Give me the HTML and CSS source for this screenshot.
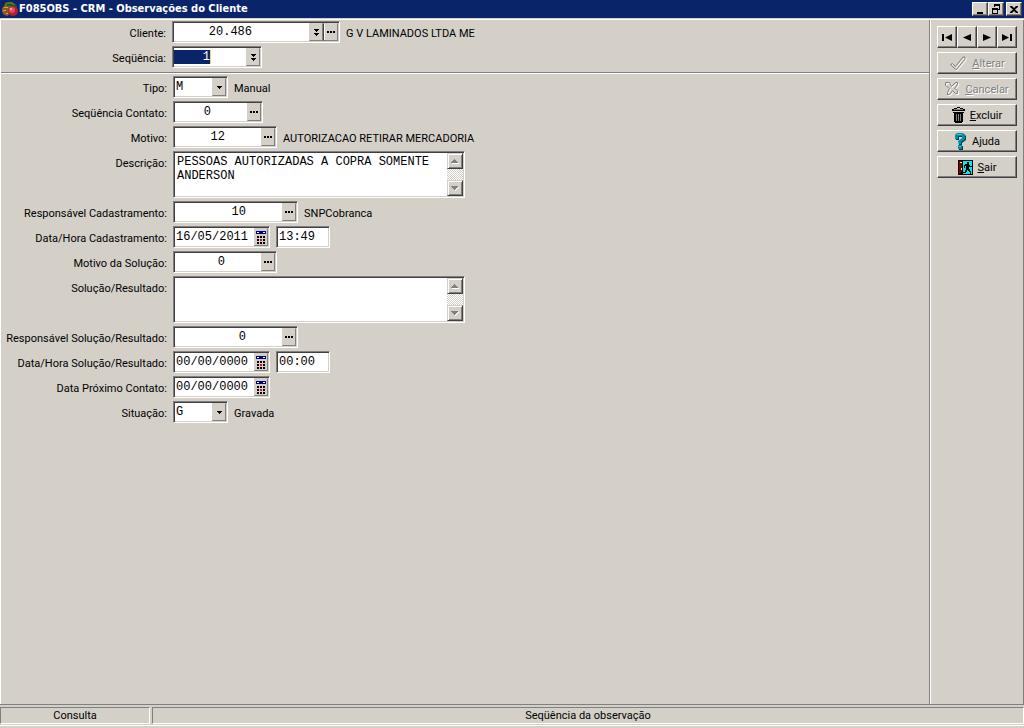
FILE: index.html
```html
<!DOCTYPE html>
<html lang="pt-BR">
<head>
<meta charset="utf-8">
<meta name="viewport" content="width=device-width, initial-scale=1">
<title>F085OBS - CRM - Observações do Cliente</title>
<link rel="stylesheet" href="styles.css">
</head>
<body>
<svg class="defs" aria-hidden="true">
  <symbol id="i-double" viewBox="0 0 5 7"><path d="M0 0h5v1H4v1H3v1H2V2H1V1H0zM0 4h5v1H4v1H3v1H2V6H1V5H0z"/></symbol>
  <symbol id="i-dots" viewBox="0 0 8 2"><path d="M0 0h2v2H0zM3 0h2v2H3zM6 0h2v2H6z"/></symbol>
  <symbol id="i-down" viewBox="0 0 5 3"><path d="M0 0h5v1H0zM1 1h3v1H1zM2 2h1v1H2z"/></symbol>
  <symbol id="i-cal" viewBox="0 0 10 13"><path fill="#000080" d="M0 0h10v3H0z"/><path fill="#fff" d="M1 1h2v1H1zM7 1h2v1H7z"/><path d="M1 5h2v2H1zM4 5h2v2H4zM7 5h2v2H7zM1 8h2v2H1zM7 8h2v2H7zM1 11h2v2H1zM4 11h2v2H4zM7 11h2v2H7z"/><path fill="#f00" d="M4 8h2v2H4z"/></symbol>
  <symbol id="i-sup" viewBox="0 0 8 5"><path fill="#fff" d="M1 4h7v1H1z"/><path fill="#808080" d="M3 0h1v1H3zM2 1h3v1H2zM1 2h5v1H1zM0 3h7v1H0z"/></symbol>
  <symbol id="i-sdown" viewBox="0 0 8 5"><path fill="#fff" d="M7 1h1v1H7v1H6v1H5v1H4V4h1V3h1V2h1z"/><path fill="#808080" d="M0 0h7v1H0zM1 1h5v1H1zM2 2h3v1H2zM3 3h1v1H3z"/></symbol>
  <symbol id="i-check" viewBox="0 0 18 15"><path d="M1.500 8.500l2-1 3 3 7.500-9.500h2v2L7.500 13.500h-1z"/></symbol>
  <symbol id="i-x" viewBox="0 0 15 14"><path d="M.5.5h4l2 4 4-4h2v2L9.500 6.500l3 2v3h-2l-3-3-3 4h-2v-2l2-4-4-3z"/></symbol>
</svg>

<header class="titlebar">
  <svg class="logo" viewBox="0 0 18 16" aria-hidden="true">
    <path fill="#4a7a28" d="M4 2l3-1h4l3 2 2 3-4 1-5-1-4 1z"/>
    <path fill="#1d5c20" d="M6 3h5v2H6zM11 4h4v2h-4z"/>
    <path fill="#8a5a20" d="M1 7l3-3 5 2v5l-2 4-4-1-2-3z"/>
    <path fill="#d9a04a" d="M3 6h4v1H3zM2 9h3v1H2zM5 12h2v1H5z"/>
    <circle cx="12" cy="10" r="5" fill="#b4202c"/><circle cx="11" cy="9" r="3" fill="#d8505c"/>
    <path fill="#f4a0a0" d="M9 7h2v2H9z"/>
  </svg>
  <h1 class="title">F085OBS - CRM - Observações do Cliente</h1>
  <div class="winbtns">
    <button class="wbtn" aria-label="Minimizar"><svg viewBox="0 0 12 11"><path d="M3 8h6v2H3z"/></svg></button>
    <button class="wbtn" aria-label="Restaurar"><svg viewBox="0 0 12 11"><path d="M4 0h6v6H8V5h1V2H5v1H4zM2 4h6v6H2zM3 6v3h4V6z" fill-rule="evenodd"/></svg></button>
    <button class="wbtn wbtn-close" aria-label="Fechar"><svg viewBox="0 0 12 11"><path d="M2 2h2l2 2 2-2h2v1L7 5.500 10 8v1H8L6 7 4 9H2V8l3-2.500L2 3z"/></svg></button>
  </div>
</header>

<div class="work">
  <main class="form">
    <section class="key">
      <div class="row"><label class="label" for="cli">Cliente:</label>
        <div class="box w-cli"><input class="num n-cli" id="cli" value="20.486"><button class="mini" aria-label="Lista de clientes"><svg class="ic-double"><use href="#i-double"/></svg></button><button class="mini raised" aria-label="Pesquisar cliente"><svg class="ic-dots"><use href="#i-dots"/></svg></button></div>
        <output class="desc" for="cli">G V LAMINADOS LTDA ME</output></div>
      <div class="row"><label class="label" for="seq">Seqüência:</label>
        <div class="box w-seq"><input class="num n-seq selected" id="seq" value="1"><button class="mini" aria-label="Lista de seqüências"><svg class="ic-double"><use href="#i-double"/></svg></button></div></div>
    </section>

    <section class="data">
      <div class="row"><label class="label" for="tipo">Tipo:</label>
        <div class="box w-sel"><select class="sel" id="tipo"><option>M</option></select><span class="mini"><svg class="ic-down"><use href="#i-down"/></svg></span></div>
        <output class="desc" for="tipo">Manual</output></div>
      <div class="row"><label class="label" for="seqc">Seqüência Contato:</label>
        <div class="box w-seqc"><input class="num n-s" id="seqc" value="0"><button class="mini" aria-label="Pesquisar contato"><svg class="ic-dots"><use href="#i-dots"/></svg></button></div></div>
      <div class="row"><label class="label" for="mot">Motivo:</label>
        <div class="box w-mot"><input class="num n-m" id="mot" value="12"><button class="mini" aria-label="Pesquisar motivo"><svg class="ic-dots"><use href="#i-dots"/></svg></button></div>
        <output class="desc" for="mot">AUTORIZACAO RETIRAR MERCADORIA</output></div>
      <div class="row"><label class="label" for="des">Descrição:</label>
        <div class="box memo"><textarea class="area" id="des">PESSOAS AUTORIZADAS A COPRA SOMENTE ANDERSON</textarea>
          <div class="scroll"><button class="sbtn" aria-label="Rolar para cima"><svg><use href="#i-sup"/></svg></button><button class="sbtn" aria-label="Rolar para baixo"><svg><use href="#i-sdown"/></svg></button></div></div></div>
      <div class="row"><label class="label" for="rc">Responsável Cadastramento:</label>
        <div class="box w-resp"><input class="num n-l" id="rc" value="10"><button class="mini" aria-label="Pesquisar responsável"><svg class="ic-dots"><use href="#i-dots"/></svg></button></div>
        <output class="desc" for="rc">SNPCobranca</output></div>
      <div class="row"><label class="label" for="dc">Data/Hora Cadastramento:</label>
        <div class="box w-date"><input class="txt" id="dc" value="16/05/2011"><button class="mini" aria-label="Calendário"><svg class="ic-cal"><use href="#i-cal"/></svg></button></div>
        <div class="box w-time"><input class="txt" value="13:49" aria-label="Hora Cadastramento"></div></div>
      <div class="row"><label class="label" for="ms">Motivo da Solução:</label>
        <div class="box w-mot"><input class="num n-m" id="ms" value="0"><button class="mini" aria-label="Pesquisar motivo da solução"><svg class="ic-dots"><use href="#i-dots"/></svg></button></div></div>
      <div class="row"><label class="label" for="sr">Solução/Resultado:</label>
        <div class="box memo"><textarea class="area" id="sr"></textarea>
          <div class="scroll"><button class="sbtn" aria-label="Rolar para cima"><svg><use href="#i-sup"/></svg></button><button class="sbtn" aria-label="Rolar para baixo"><svg><use href="#i-sdown"/></svg></button></div></div></div>
      <div class="row"><label class="label" for="rs">Responsável Solução/Resultado:</label>
        <div class="box w-resp"><input class="num n-l" id="rs" value="0"><button class="mini" aria-label="Pesquisar responsável"><svg class="ic-dots"><use href="#i-dots"/></svg></button></div></div>
      <div class="row"><label class="label" for="ds">Data/Hora Solução/Resultado:</label>
        <div class="box w-date"><input class="txt" id="ds" value="00/00/0000"><button class="mini" aria-label="Calendário"><svg class="ic-cal"><use href="#i-cal"/></svg></button></div>
        <div class="box w-time"><input class="txt" value="00:00" aria-label="Hora Solução/Resultado"></div></div>
      <div class="row"><label class="label" for="dp">Data Próximo Contato:</label>
        <div class="box w-date"><input class="txt" id="dp" value="00/00/0000"><button class="mini" aria-label="Calendário"><svg class="ic-cal"><use href="#i-cal"/></svg></button></div></div>
      <div class="row"><label class="label" for="sit">Situação:</label>
        <div class="box w-sel"><select class="sel" id="sit"><option>G</option></select><span class="mini"><svg class="ic-down"><use href="#i-down"/></svg></span></div>
        <output class="desc" for="sit">Gravada</output></div>
    </section>
  </main>

  <aside class="side">
    <div class="nav">
      <button class="btn" aria-label="Primeiro"><svg class="ic-nav" viewBox="0 0 12 9"><path d="M1 1h2v7H1zM11 1v7L4 4.500z"/></svg></button>
      <button class="btn" aria-label="Anterior"><svg class="ic-nav" viewBox="0 0 12 9"><path d="M10 1v7L2 4.500z"/></svg></button>
      <button class="btn" aria-label="Próximo"><svg class="ic-nav" viewBox="0 0 12 9"><path d="M2 1v7l8-3.500z"/></svg></button>
      <button class="btn" aria-label="Último"><svg class="ic-nav" viewBox="0 0 12 9"><path d="M1 1v7l7-3.500zM9 1h2v7H9z"/></svg></button>
    </div>
    <button class="btn" disabled><svg class="ic-check" viewBox="0 0 18 15"><use class="lo" href="#i-check" x="1" y="1" width="18" height="15"/><use class="hi" href="#i-check" width="18" height="15"/></svg><span><u>A</u>lterar</span></button>
    <button class="btn" disabled><svg class="ic-x" viewBox="0 0 15 14"><use class="lo" href="#i-x" x="1" y="1" width="15" height="14"/><use class="hi" href="#i-x" width="15" height="14"/></svg><span><u>C</u>ancelar</span></button>
    <button class="btn"><svg class="ic-trash" viewBox="0 0 13 16"><path d="M5 0h3v1h3v1h2v2H0V2h2V1h3zM1 5h11v1H1zM2 6h9v9H2zM3 15h7v1H3z"/><path fill="#808080" d="M4 7h1v7H4zM6 7h1v7H6zM8 7h1v7H8zM2 2h9v1H2z"/><path fill="#d4d0c8" d="M5 1h3v1H5z"/></svg><span><u>E</u>xcluir</span></button>
    <button class="btn"><svg class="ic-help" viewBox="0 0 13 17"><path fill="#003c58" d="M3 1h7l2 2v4l-4 3v2H5V9l4-3V4H5v3H2V2zM5 13h4v4H5z"/><path fill="#0090a0" d="M3 0h6l2 2v4L7 9v2H4V8l4-3V3H4v3H1V2zM4 12h4v4H4z"/><path fill="#30c8d8" d="M3 1h5v1H3zM4 9h1v2H4zM5 13h2v1H5z"/></svg><span>A<u>j</u>uda</span></button>
    <button class="btn"><svg class="ic-exit" viewBox="0 0 15 15"><path d="M0 0h15v15H0z"/><path fill="#00e8f0" d="M5 1h9v13H5z"/><path fill="#800000" d="M1 1h2v2h1v9H3v1H2v1H1z"/><path fill="#ff0" d="M2 2h2v1H2zM3 8h1v2H3z"/><path d="M9 2h2v2H9zM7 4h4v1h1v1h2v1h-3v2h1v2h1v3h-1v-2h-1v-1h-1v-1H9v2H8v1H5v-1h2v-2h1V6H7v2H6V5h1z"/></svg><span><u>S</u>air</span></button>
  </aside>
</div>

<footer class="status">
  <div class="cell cell-mode">Consulta</div>
  <div class="cell cell-hint">Seqüência da observação</div>
</footer>
</body>
</html>
```
FILE: styles.css
```css
* { box-sizing: border-box; }

body {
  margin: 0;
  min-height: 100vh;
  display: flex;
  flex-direction: column;
  background: #d4d0c8;
  color: #000;
  font-family: Roboto, "Liberation Sans", sans-serif;
  font-size: 11px;
  line-height: 16px;
}

button, input, select, textarea { margin: 0; padding: 0; border: 0; border-radius: 0; color: inherit; font: inherit; outline: 0; }
svg { display: block; flex: none; }
.defs { display: none; }

/* Title bar */
.titlebar { display: flex; align-items: center; height: 18px; padding: 0 2px 0 1px; background: #0a246a; color: #fff; }
.logo { width: 18px; height: 16px; }
.title { margin: 0; flex: 1; font: bold 11px/16px "DejaVu Sans Condensed", "Noto Sans", sans-serif; white-space: nowrap; }
.winbtns { display: flex; }
.wbtn {
  width: 16px; height: 14px; padding: 1px;
  background: #d4d0c8; color: #000;
  border: 1px solid; border-color: #fff #404040 #404040 #fff;
  box-shadow: inset -1px -1px #808080;
}
.wbtn svg { width: 12px; height: 11px; }
.wbtn-close { margin-left: 2px; }

/* Work area */
.work { flex: 1; display: flex; margin-top: 1px; border-top: 1px solid #fff; border-bottom: 1px solid #808080; }
.form { flex: 1; border-left: 1px solid #fff; border-right: 1px solid #808080; }
.key { display: flex; flex-direction: column; gap: 3px; padding: 1px 0 4px; border-bottom: 1px solid #808080; }
.data { display: flex; flex-direction: column; gap: 3px; padding: 2px 0; border-top: 1px solid #fff; }
.row { display: flex; align-items: flex-start; gap: 6px; }
.label { width: 166px; padding-top: 5px; text-align: right; white-space: nowrap; }
.key .label { width: 165px; }
.desc { padding-top: 5px; white-space: nowrap; }

.box {
  display: flex;
  height: 22px;
  padding: 1px;
  background: #fff;
  border: 1px solid; border-color: #808080 #fff #fff #808080;
  box-shadow: inset 1px 1px #404040, inset -1px -1px #d4d0c8;
  font-family: "Liberation Mono", monospace;
}
.w-cli { width: 168px; }
.w-seq { width: 90px; }
.w-sel { width: 55px; }
.w-seqc { width: 90px; }
.w-mot { width: 104px; }
.w-resp { width: 125px; }
.w-date { width: 97px; }
.w-time { width: 54px; }

.num, .txt, .sel { height: 18px; background: none; font-size: 12px; line-height: 18px; }
.num { text-align: right; }
.n-cli { width: 78px; }
.n-seq { width: 37px; }
.n-s { width: 36px; }
.n-m { width: 50px; }
.n-l { width: 71px; }
.selected { height: 14px; margin-top: 2px; line-height: 14px; background: #0a246a; color: #fff; border-right: 1px solid #f5d08a; }
.txt { flex: 1; min-width: 0; padding-left: 1px; }
.sel { flex: 1; appearance: none; padding-left: 1px; }

.mini {
  display: flex; align-items: center; justify-content: center;
  flex: none; width: 14px; height: 18px;
  background: #d4d0c8;
  border: 1px solid; border-color: #d4d0c8 #808080 #808080 #d4d0c8;
}
.num + .mini { margin-left: auto; }
.raised { border-left-color: #404040; box-shadow: inset 1px 0 #fff; width: 15px; }
.ic-double { width: 5px; height: 7px; }
.ic-dots { width: 8px; height: 2px; }
.ic-down { width: 5px; height: 3px; }
.ic-cal { width: 10px; height: 13px; }

.memo { width: 292px; height: 47px; }
.area { flex: 1; resize: none; overflow: hidden; background: none; padding: 2px; font-size: 12px; line-height: 14px; }
.scroll {
  display: flex; flex-direction: column; justify-content: space-between;
  width: 16px;
  background: repeating-conic-gradient(#fff 0 25%, #d4d0c8 0 50%) 0 0 / 2px 2px;
}
.sbtn {
  display: flex; align-items: center; justify-content: center;
  width: 16px; height: 16px;
  background: #d4d0c8;
  border: 1px solid; border-color: #d4d0c8 #404040 #404040 #d4d0c8;
  box-shadow: inset 1px 1px #fff, inset -1px -1px #808080;
}
.sbtn svg { width: 8px; height: 5px; }

/* Side buttons */
.side { display: flex; flex-direction: column; gap: 4px; width: 94px; padding: 6px; border-left: 1px solid #fff; border-right: 1px solid #808080; }
.nav { display: grid; grid-template-columns: repeat(4, 1fr); }
.btn {
  display: flex; align-items: center; justify-content: center; gap: 5px;
  width: 100%; height: 22px;
  background: #d4d0c8;
  border: 1px solid; border-color: #fff #404040 #404040 #fff;
  box-shadow: inset -1px -1px #808080;
}
.btn span { padding-top: 2px; }
.btn:disabled { color: #808080; text-shadow: 1px 1px #fff; }
.ic-nav { width: 12px; height: 9px; }
.ic-check { width: 18px; height: 15px; }
.ic-x { width: 15px; height: 14px; }
.ic-trash { width: 13px; height: 16px; }
.ic-help { width: 13px; height: 17px; }
.ic-exit { width: 15px; height: 15px; }
.lo { fill: none; stroke: #fff; }
.hi { fill: none; stroke: #808080; }

/* Status bar */
.status { display: flex; gap: 2px; margin-bottom: 2px; padding: 2px 0 1px; border-bottom: 1px solid #fff; }
.cell {
  height: 17px;
  border: 1px solid; border-color: #808080 #fff #fff #808080;
  text-align: center;
}
.cell-mode { width: 150px; }
.cell-hint { flex: 1; }
```
